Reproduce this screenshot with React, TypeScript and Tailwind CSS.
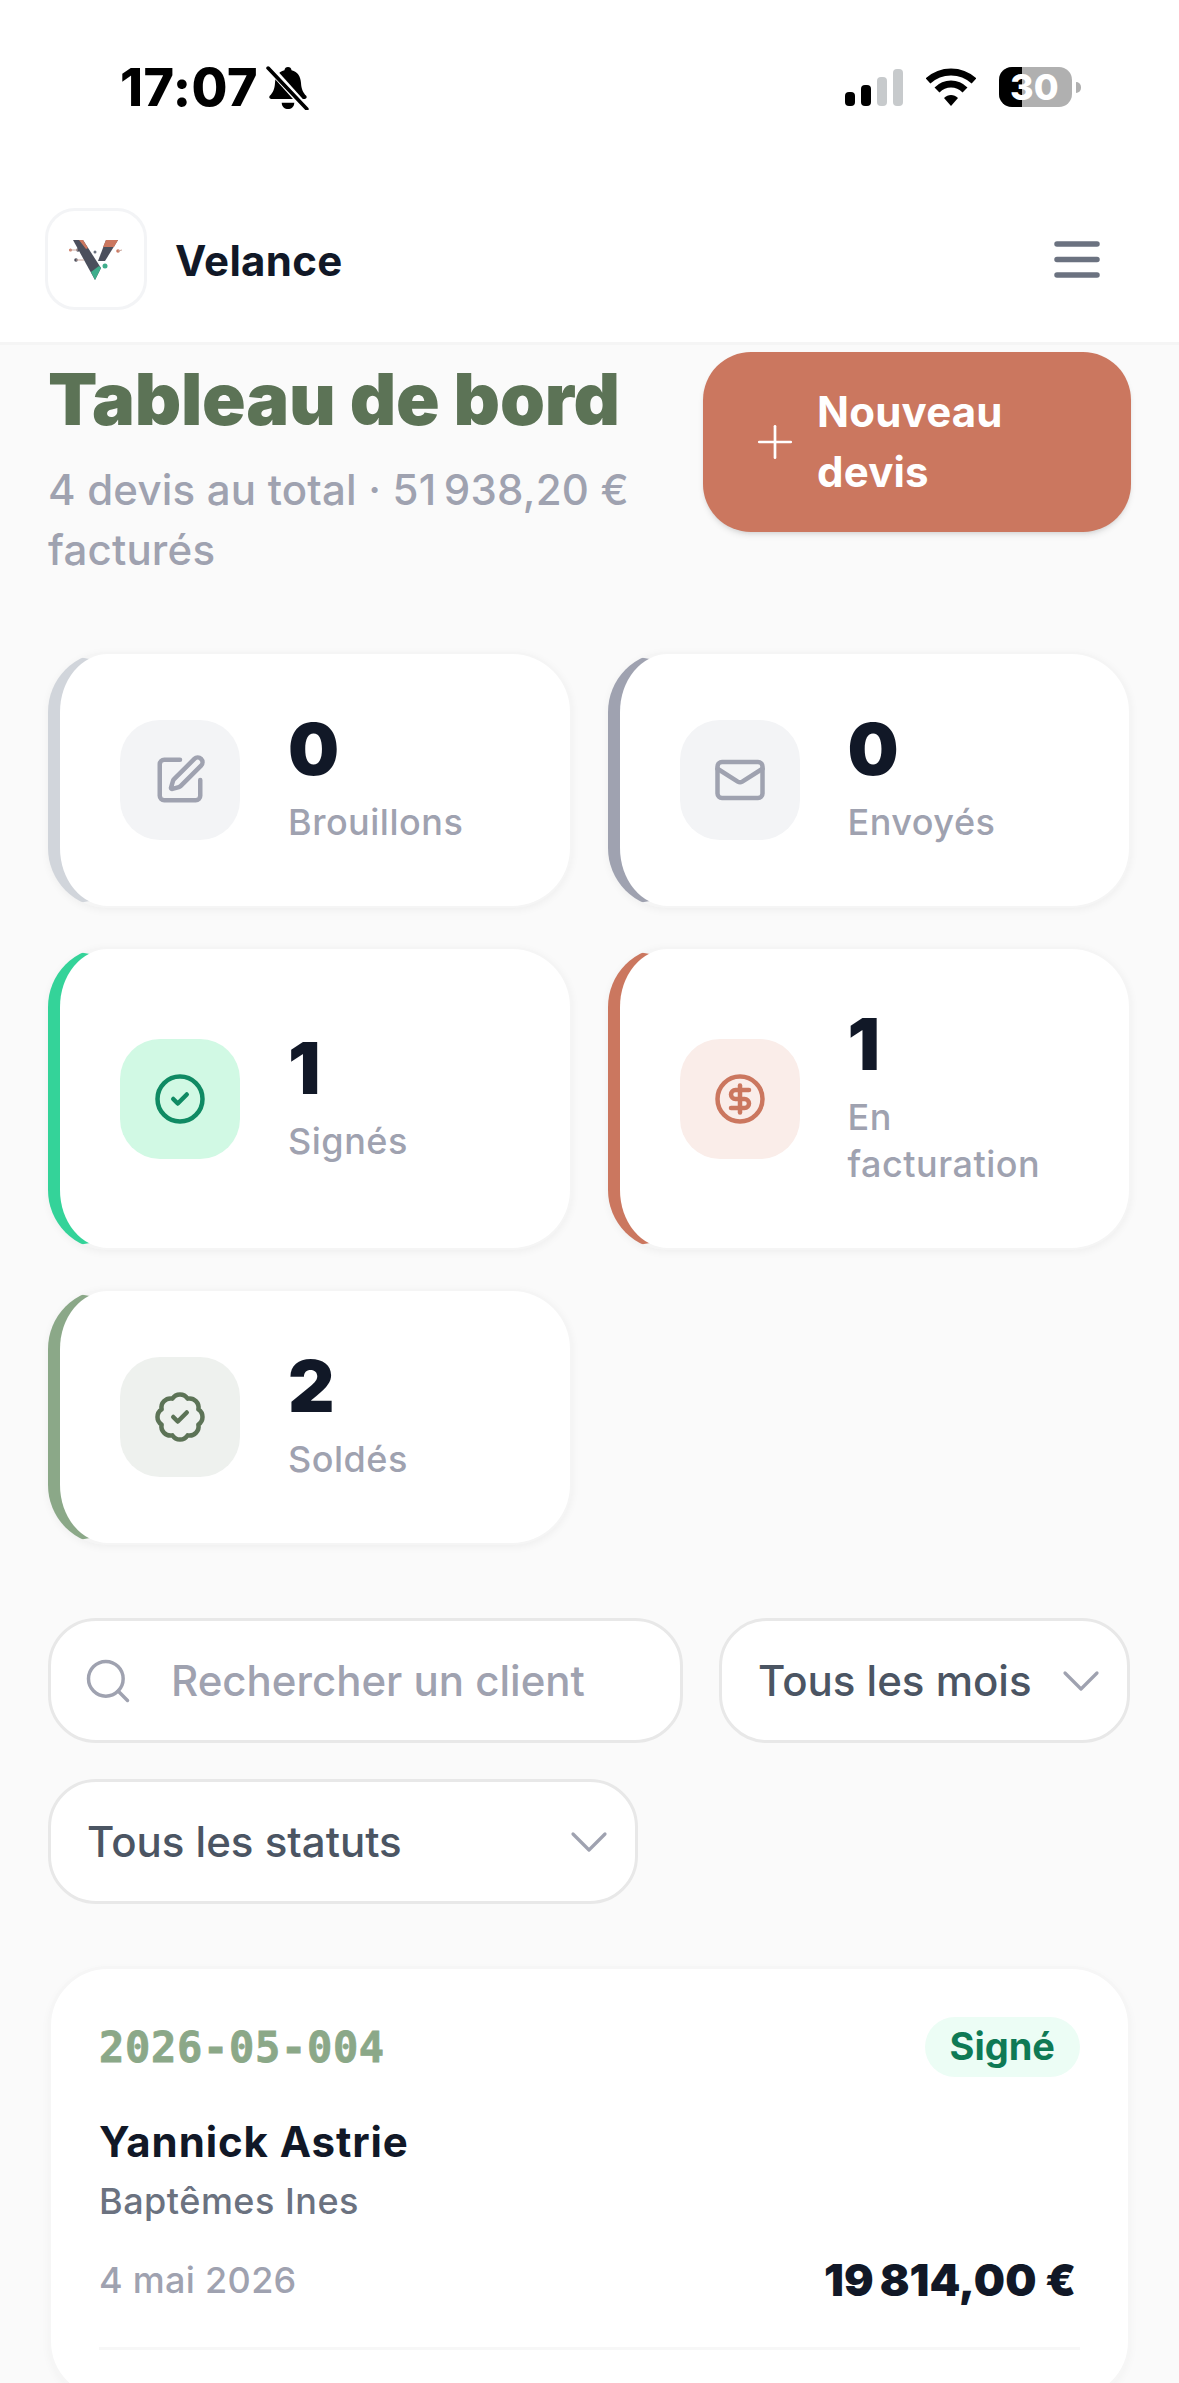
import { BadgeCheck, ChevronDown, CircleCheck, CircleDollarSign, Mail, Plus, Search, SquarePen } from "lucide-react";

const stats = [
  { value: "0", label: "Brouillons", Icon: SquarePen, accent: "border-l-[#d1d5db]", box: "bg-[#f3f4f6]", color: "text-[#9fa2b0]" },
  { value: "0", label: "Envoyés", Icon: Mail, accent: "border-l-[#9fa2b0]", box: "bg-[#f3f4f6]", color: "text-[#9fa2b0]" },
  { value: "1", label: "Signés", Icon: CircleCheck, accent: "border-l-[#34d399]", box: "bg-[#d1f9e4]", color: "text-[#0f8a63]" },
  { value: "1", label: "En facturation", Icon: CircleDollarSign, accent: "border-l-[#cb775f]", box: "bg-[#faede9]", color: "text-[#cb775f]" },
  { value: "2", label: "Soldés", Icon: BadgeCheck, accent: "border-l-[#8ba888]", box: "bg-[#eef1ee]", color: "text-[#5c7356]" },
];

function StatusBar() {
  return (
    <div className="flex h-[208px] items-start justify-between pl-[120px] pr-[98px] pt-[66px]">
      <div className="flex items-center gap-[8px]">
        <span className="text-[52px] font-extrabold leading-[44px] tracking-[0.5px] text-black">17:07</span>
        <svg width="44" height="44" viewBox="0 0 42 42">
          <path d="M21 1c2 0 3 1 3.400 3 6 1.500 8.600 6 9 12 .3 6 2 9.500 5 12.500.8 1 .6 3-1.400 3H5c-2 0-2.300-2-1.400-3 3-3 4.700-6.500 5-12.500.4-6 3-10.500 9-12 .4-2 1.400-3 3.400-3z" fill="#000" />
          <path d="M15 35h12c0 4-3 6-6 6s-6-2-6-6z" fill="#000" />
          <path d="M3 1l36 40" stroke="#fff" strokeWidth="7" />
          <path d="M2 2l37 39" stroke="#000" strokeWidth="3.500" strokeLinecap="round" />
        </svg>
      </div>
      <div className="flex items-center pt-[1px]">
        <div className="flex items-end gap-[6px]">
          <div className="h-[14px] w-[10px] rounded-[4px] bg-black" />
          <div className="h-[21px] w-[10px] rounded-[4px] bg-black" />
          <div className="h-[29px] w-[10px] rounded-[4px] bg-[#c7cacc]" />
          <div className="h-[37px] w-[10px] rounded-[4px] bg-[#c7cacc]" />
        </div>
        <svg className="ml-[23px]" width="50" height="38" viewBox="0 0 50 38">
          <path d="M2 13C15 1 35 1 48 13" fill="none" stroke="#000" strokeWidth="7" />
          <path d="M11 22C19 14 31 14 39 22" fill="none" stroke="#000" strokeWidth="7" />
          <path d="M18 30c4-4 10-4 14 0l-7 8z" fill="#000" />
        </svg>
        <div className="ml-[23px] flex h-[40px] w-[73px] rounded-[13px] bg-[#b0b0b0]">
          <div className="h-full w-[23px] rounded-l-[13px] bg-black" />
          <span className="-ml-[12px] w-[48px] text-center text-[36px] font-extrabold leading-[40px] text-white">30</span>
        </div>
        <div className="ml-[4px] h-[11px] w-[5px] rounded-r-[5px] bg-[#b0b0b0]" />
      </div>
    </div>
  );
}

function Logo() {
  return (
    <svg width="54" height="41" viewBox="0 0 54 41">
      <path d="M4 1h10l18 28-6 12z" fill="#4b4f5c" />
      <path d="M10 1h4l5 8-2 1z" fill="#cb775f" />
      <path d="M29 22L37 1h12L36 22z" fill="#4b4f5c" />
      <path d="M37 1h12l-4 7h-11z" fill="#cb775f" />
      <path d="M22 33l8-6 2 2-6 12z" fill="#3fae8c" />
      <circle cx="36" cy="27" r="2.500" fill="#3fae8c" />
      <circle cx="1.500" cy="11" r="1.500" fill="#cb775f" />
      <circle cx="9" cy="11" r="1.800" fill="#4b4f5c" />
      <circle cx="26" cy="13" r="1.500" fill="#6b7280" />
      <circle cx="7" cy="21" r="1.800" fill="#4b4f5c" />
      <circle cx="49" cy="12" r="1.800" fill="#cb775f" />
      <path d="M1 11h8M7 21h8M49 12l4-1" stroke="#c9a79d" strokeWidth="1" />
    </svg>
  );
}

function Header() {
  return (
    <header className="border-b-[3px] border-[#f5f5f5] bg-white">
      <StatusBar />
      <div className="flex h-[134px] items-start justify-between pl-[45px] pr-[78px]">
        <div className="flex items-center gap-[28px]">
          <div className="flex h-[102px] w-[102px] items-center justify-center rounded-[30px] border-[3px] border-[#f3f4f6] bg-white">
            <Logo />
          </div>
          <span className="pt-[3px] text-[42px] font-bold leading-[60px] tracking-[0.3px] text-[#111827]">Velance</span>
        </div>
        <svg className="mt-[31px]" width="48" height="40" viewBox="0 0 48 40">
          <path d="M4 5h40M4 20.500h40M4 36h40" stroke="#6b7280" strokeWidth="5.500" strokeLinecap="round" />
        </svg>
      </div>
    </header>
  );
}

function FilterSelect({ label, width }: { label: string; width: string }) {
  return (
    <div className={`flex h-[125px] items-center justify-between rounded-[48px] border-[3px] border-[#e8e8e8] bg-white pl-[36px] pr-[14px] ${width}`}>
      <span className="text-[42px] font-medium text-[#4b5563]">{label}</span>
      <ChevronDown size={64} strokeWidth={1.200} className="text-[#9fa2b0]" />
    </div>
  );
}

export default function App() {
  return (
    <div className="h-[2383px] overflow-hidden bg-[#fafafa] font-['Inter',sans-serif]">
      <Header />
      <main className="px-[48px] pt-[7px]">
        <section className="flex items-start justify-between gap-[36px]">
          <div className="flex-1">
            <h1 className="pt-[2px] text-[72px] font-black leading-[90px] tracking-[-0.2px] text-[#5c7356]">Tableau de bord</h1>
            <p className="mt-[16px] text-[42px] font-medium leading-[60px] tracking-[0.2px] text-[#9fa2b0]">
              4 devis au total · 51{"\u202f"}938,20 € facturés
            </p>
          </div>
          <button className="flex h-[180px] w-[428px] shrink-0 items-center gap-[15px] rounded-[48px] bg-[#cb775f] pl-[45px] pr-[40px] text-left text-[42px] font-bold leading-[60px] tracking-[0.2px] text-white shadow-md">
            <Plus size={54} strokeWidth={1.200} className="shrink-0" />
            <span>Nouveau devis</span>
          </button>
        </section>

        <section className="mt-[72px] grid grid-cols-2 gap-x-[36px] gap-y-[39px]">
          {stats.map((s) => (
            <div
              key={s.label}
              className={`flex items-center gap-[48px] rounded-[60px] border-2 border-l-[12px] border-[#f5f5f5] bg-white p-[60px] shadow-[0_2px_9px_rgba(0,0,0,0.05)] ${s.accent}`}
            >
              <div className={`flex h-[120px] w-[120px] shrink-0 items-center justify-center rounded-[40px] ${s.box}`}>
                <s.Icon size={54} strokeWidth={2} className={s.color} />
              </div>
              <div>
                <div className="mb-[16px] text-[72px] font-black leading-[69px] text-[#111827]">{s.value}</div>
                <div className="text-[36px] font-medium leading-[47px] tracking-[0.5px] text-[#9fa2b0]">{s.label}</div>
              </div>
            </div>
          ))}
        </section>

        <section className="mt-[73px] flex flex-wrap gap-[36px]">
          <div className="flex h-[125px] w-[635px] items-center gap-[37px] rounded-[48px] border-[3px] border-[#e8e8e8] bg-white pl-[31px]">
            <Search size={52} strokeWidth={1.600} className="text-[#9fa2b0]" />
            <span className="text-[42px] font-medium text-[#9fa2b0]">Rechercher un client</span>
          </div>
          <FilterSelect label="Tous les mois" width="w-[411px]" />
          <FilterSelect label="Tous les statuts" width="w-[590px]" />
        </section>

        <section className="mt-[62px] rounded-[60px] border-[3px] border-[#f6f6f6] bg-white p-[48px] shadow-[0_3px_9px_rgba(0,0,0,0.03)]">
          <div className="flex h-[60px] items-center justify-between">
            <span className="font-['DejaVu_Sans_Mono',monospace] text-[42px] font-bold tracking-[0.7px] text-[#8ba888] [-webkit-text-stroke:0.8px_#8ba888]">2026-05-004</span>
            <span className="rounded-full bg-[#ecfdf5] px-[25px] pb-[2px] text-[38px] font-bold leading-[58px] text-[#0f7a55]">Signé</span>
          </div>
          <div className="mt-[35px] text-[42px] font-bold leading-[60px] tracking-[0.9px] text-[#111827]">Yannick Astrie</div>
          <div className="mt-[5px] text-[36px] font-medium leading-[48px] tracking-[0.5px] text-[#6b7280]">Baptêmes Ines</div>
          <div className="mt-[25px] flex h-[60px] items-center justify-between">
            <span className="text-[36px] font-medium tracking-[0.3px] text-[#9fa2b0]">4 mai 2026</span>
            <span className="mr-[4px] text-[44px] font-black tracking-[1.4px] text-[#111827]">19{"\u202f"}814,00 €</span>
          </div>
          <div className="mt-[37px] h-[3px] bg-[#f7f7f7]" />
        </section>
      </main>
    </div>
  );
}
